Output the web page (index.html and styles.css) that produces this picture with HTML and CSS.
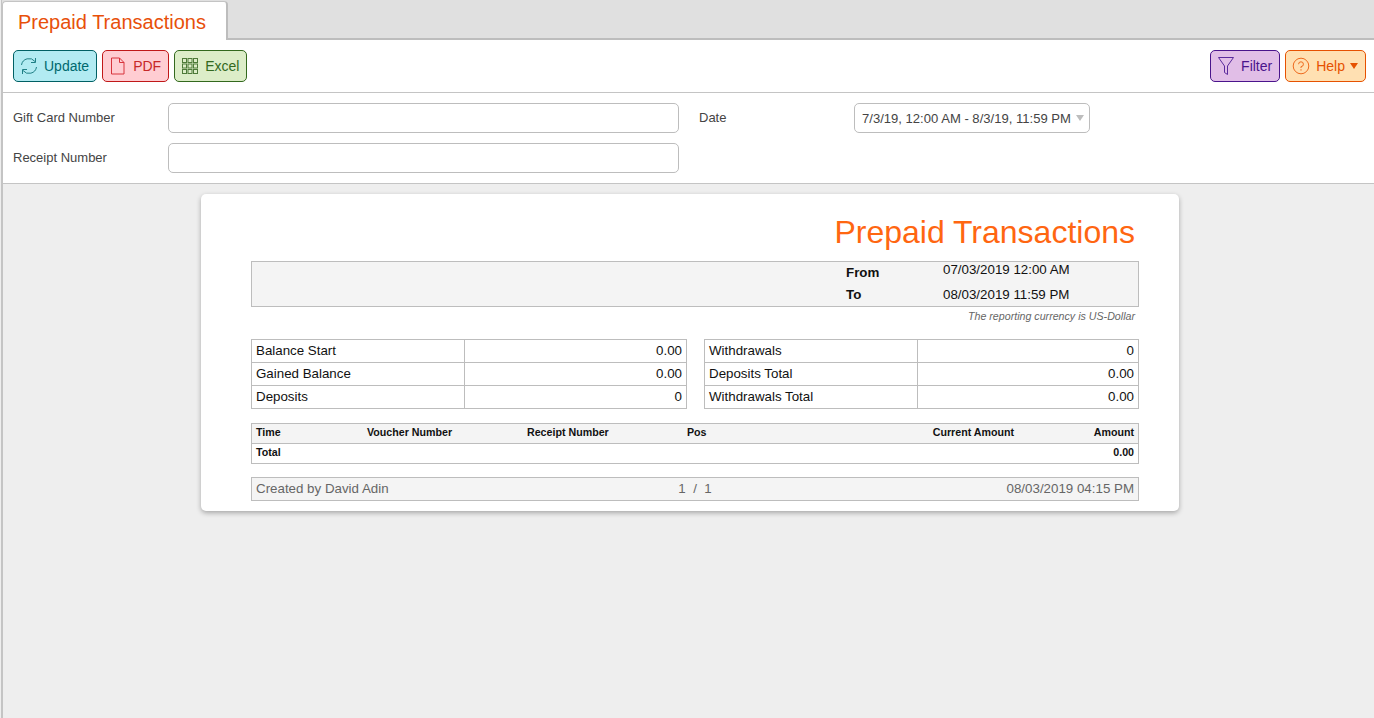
FILE: index.html
```html
<!DOCTYPE html>
<html lang="en">
<head>
    <meta charset="UTF-8">
    <title>Prepaid Transactions</title>
    <link rel="stylesheet" href="styles.css">
</head>
<body>
  <div class="page">
    <div class="tab-bar">
        <div class="tab">Prepaid Transactions</div>
    </div>

    <div class="panel">
        <div class="toolbar">
            <div class="btn-group">
                <div class="btn btn-update">
                    <svg class="icon" viewBox="0 0 18 18" fill="none" stroke="#1f7f85" stroke-width="1">
                        <path d="M1.5 8A7.6 7.6 0 0 1 15 4.5"/>
                        <path d="M15.5 1V5.5H11"/>
                        <path d="M16.5 10A7.6 7.6 0 0 1 3 13.5"/>
                        <path d="M2.5 17V12.5H7"/>
                    </svg>
                    Update
                </div>
                <div class="btn btn-pdf">
                    <svg class="icon" viewBox="0 0 18 18" fill="none" stroke="#d8343c" stroke-width="1">
                        <path d="M2.5 1H10.5L15 5.5V17H2.5Z"/>
                        <path d="M10.5 1V5.5H15"/>
                    </svg>
                    PDF
                </div>
                <div class="btn btn-excel">
                    <svg class="icon" viewBox="0 0 18 18" fill="none" stroke="#4d7a38" stroke-width="1">
                        <rect x="1.5" y="1.5" width="4" height="4"/><rect x="7" y="1.5" width="4" height="4"/><rect x="12.5" y="1.5" width="4" height="4"/>
                        <rect x="1.5" y="7" width="4" height="4"/><rect x="7" y="7" width="4" height="4"/><rect x="12.5" y="7" width="4" height="4"/>
                        <rect x="1.5" y="12.5" width="4" height="4"/><rect x="7" y="12.5" width="4" height="4"/><rect x="12.5" y="12.5" width="4" height="4"/>
                    </svg>
                    Excel
                </div>
            </div>
            <div class="btn-group">
                <div class="btn btn-filter">
                    <svg class="icon" viewBox="0 0 18 18" fill="none" stroke="#5a2a9c" stroke-width="1">
                        <path d="M1.5 0.5H16.5L10.5 9V17.5L7.5 15.5V9Z"/>
                    </svg>
                    Filter
                </div>
                <div class="btn btn-help">
                    <svg class="icon" viewBox="0 0 18 18" fill="none" stroke="#ee6a1e" stroke-width="1">
                        <circle cx="9" cy="9" r="7.8"/>
                        <path d="M6.6 7.2A2.4 2.4 0 1 1 9 9.6V11"/>
                        <path d="M9 12.2V13.6"/>
                    </svg>
                    Help
                    <span class="caret"></span>
                </div>
            </div>
        </div>

        <div class="filters">
            <div class="filter-col">
                <div class="filter-row">
                    <label class="filter-label">Gift Card Number</label>
                    <div class="text-input"></div>
                </div>
                <div class="filter-row">
                    <label class="filter-label">Receipt Number</label>
                    <div class="text-input"></div>
                </div>
            </div>
            <div class="filter-col">
                <div class="filter-row">
                    <label class="filter-label">Date</label>
                    <div class="date-input">
                        7/3/19, 12:00 AM - 8/3/19, 11:59 PM
                        <span class="date-caret"></span>
                    </div>
                </div>
            </div>
        </div>
    </div>

    <div class="content">
        <div class="report">
            <h1 class="report-title">Prepaid Transactions</h1>

            <div class="period">
                <div class="period-row period-from">
                    <span class="period-label">From</span>
                    <span class="period-value">07/03/2019 12:00 AM</span>
                </div>
                <div class="period-row">
                    <span class="period-label">To</span>
                    <span class="period-value">08/03/2019 11:59 PM</span>
                </div>
            </div>
            <p class="currency-note">The reporting currency is US-Dollar</p>

            <div class="summary">
                <table class="summary-table">
                    <tr><td>Balance Start</td><td>0.00</td></tr>
                    <tr><td>Gained Balance</td><td>0.00</td></tr>
                    <tr><td>Deposits</td><td>0</td></tr>
                </table>
                <table class="summary-table summary-right">
                    <tr><td>Withdrawals</td><td>0</td></tr>
                    <tr><td>Deposits Total</td><td>0.00</td></tr>
                    <tr><td>Withdrawals Total</td><td>0.00</td></tr>
                </table>
            </div>

            <table class="data-table">
                <tr class="data-head">
                    <td class="col-time">Time</td>
                    <td class="col-voucher">Voucher Number</td>
                    <td class="col-receipt">Receipt Number</td>
                    <td class="col-pos">Pos</td>
                    <td class="col-current">Current Amount</td>
                    <td class="col-amount">Amount</td>
                </tr>
                <tr>
                    <td>Total</td>
                    <td></td>
                    <td></td>
                    <td></td>
                    <td></td>
                    <td class="col-amount">0.00</td>
                </tr>
            </table>

            <div class="report-footer">
                <span class="footer-part">Created by David Adin</span>
                <span class="footer-part footer-page">1 &nbsp;/&nbsp; 1</span>
                <span class="footer-part footer-date">08/03/2019 04:15 PM</span>
            </div>
        </div>
    </div>
  </div>
</body>
</html>
```

FILE: styles.css
```css
html, body {
    height: 100%;
}

body {
    margin: 0;
    padding-left: 1px;
    box-sizing: border-box;
    overflow: hidden;
    font-family: "Liberation Sans", Arial, sans-serif;
    background: #eee;
}

.page {
    height: 100%;
    display: flex;
    flex-direction: column;
    border-left: 2px solid #c4c4c4;
}

.tab-bar {
    height: 37px;
    margin-left: -1px;
    padding-top: 1px;
    background: #e0e0e0;
    border-bottom: 2px solid #bdbdbd;
    display: flex;
}

.tab {
    width: 226px;
    height: 39px;
    box-sizing: border-box;
    padding: 8px 0 0 15px;
    background: #fff;
    border: 1px solid #c4c4c4;
    border-right: 2px solid #bdbdbd;
    border-bottom: none;
    border-radius: 4px 4px 0 0;
    color: #e8500a;
    font-size: 20px;
    line-height: 24px;
}

.panel {
    background: #fff;
    border-bottom: 1px solid #c4c4c4;
}

.toolbar {
    height: 53px;
    box-sizing: border-box;
    padding: 10px 8px 0 10px;
    display: flex;
    justify-content: space-between;
    border-bottom: 1px solid #c4c4c4;
}

.btn-group {
    display: flex;
    gap: 5px;
}

.btn {
    height: 32px;
    box-sizing: border-box;
    padding: 0 7px 0 6px;
    display: flex;
    align-items: center;
    gap: 6px;
    border: 1px solid;
    border-radius: 5px;
    font-size: 14px;
}

.icon {
    width: 18px;
    height: 18px;
    flex: none;
}

.btn-update {
    background: #b2ebf2;
    border-color: #006064;
    color: #00696f;
}

.btn-pdf {
    background: #ffcdd2;
    border-color: #c01818;
    color: #c62828;
}

.btn-excel {
    background: #dcedc8;
    border-color: #33691e;
    color: #33691e;
}

.btn-filter {
    background: #e1bee7;
    border-color: #4a148c;
    color: #4a148c;
}

.btn-help {
    background: #ffe0b2;
    border-color: #e65100;
    color: #e65100;
}

.caret {
    width: 0;
    height: 0;
    margin-left: -1px;
    border-left: 4px solid transparent;
    border-right: 4px solid transparent;
    border-top: 6px solid #e65100;
}

.filters {
    height: 90px;
    box-sizing: border-box;
    padding: 10px 0 0 10px;
    display: flex;
    gap: 20px;
}

.filter-col {
    width: 666px;
    display: flex;
    flex-direction: column;
    gap: 10px;
}

.filter-row {
    height: 30px;
    display: flex;
    align-items: center;
}

.filter-label {
    width: 155px;
    flex: none;
    margin-top: -2px;
    font-size: 13px;
    color: #444;
}

.text-input {
    width: 511px;
    height: 30px;
    box-sizing: border-box;
    background: #fff;
    border: 1px solid #bdbdbd;
    border-radius: 5px;
}

.date-input {
    width: 236px;
    height: 30px;
    box-sizing: border-box;
    padding-left: 7px;
    display: flex;
    align-items: center;
    border: 1px solid #bdbdbd;
    border-radius: 5px;
    font-size: 13.07px;
    color: #444;
    white-space: nowrap;
}

.date-caret {
    width: 0;
    height: 0;
    margin-left: 5px;
    border-left: 4px solid transparent;
    border-right: 4px solid transparent;
    border-top: 6px solid #bdbdbd;
}

.content {
    flex: 1;
    padding-top: 10px;
    padding-left: 198px;
}

.report {
    width: 978px;
    height: 317px;
    box-sizing: border-box;
    padding: 0 40px 0 50px;
    background: #fff;
    border-radius: 5px;
    box-shadow: 0 2px 5px rgba(0,0,0,0.3);
}

.report-title {
    margin: 0;
    padding: 20px 4px 0 0;
    height: 67px;
    box-sizing: border-box;
    text-align: right;
    font-size: 32px;
    line-height: 37px;
    font-weight: normal;
    color: #ff6611;
}

.period {
    height: 46px;
    box-sizing: border-box;
    background: #f4f4f4;
    border: 1px solid #bdbdbd;
    padding-left: 594px;
    font-size: 13.33px;
    color: #111;
}

.period-row {
    height: 22px;
    box-sizing: border-box;
    padding-bottom: 2px;
    display: flex;
    align-items: center;
}

.period-from .period-value {
    margin-top: -5px;
}

.period-label {
    width: 97px;
    font-weight: bold;
}

.currency-note {
    margin: 3px 4px 0 0;
    height: 16px;
    text-align: right;
    font-size: 10.67px;
    line-height: 12px;
    font-style: italic;
    color: #666;
}

.summary {
    margin-top: 13px;
    display: flex;
    justify-content: space-between;
}

.summary-table {
    width: 436px;
    border-collapse: collapse;
    table-layout: fixed;
    font-size: 13.33px;
    color: #111;
}

.summary-right {
    width: 435px;
}

.summary-table td {
    height: 20px;
    padding: 0 4px 2px;
    border: 1px solid #bdbdbd;
}

.summary-table td:first-child {
    width: 204px;
}

.summary-table td:last-child {
    text-align: right;
}

.data-table {
    margin-top: 14px;
    width: 100%;
    border-collapse: collapse;
    table-layout: fixed;
    font-size: 10.67px;
    font-weight: bold;
    color: #111;
}

.data-table td {
    height: 15px;
    padding: 0 4px 4px;
}

.data-table tr {
    border: 1px solid #bdbdbd;
}

.data-head {
    background: #f4f4f4;
}

.col-time { width: 103px; }
.col-voucher { width: 152px; }
.col-receipt { width: 152px; }
.col-pos { width: 150px; }
.col-current { text-align: right; }
.col-amount { width: 112px; text-align: right; }

.report-footer {
    margin-top: 13px;
    height: 24px;
    box-sizing: border-box;
    padding: 0 4px 2px;
    display: flex;
    align-items: center;
    background: #f4f4f4;
    border: 1px solid #bdbdbd;
    font-size: 13.33px;
    color: #666;
}

.footer-part {
    flex: 1;
}

.footer-page {
    text-align: center;
}

.footer-date {
    text-align: right;
}
```
